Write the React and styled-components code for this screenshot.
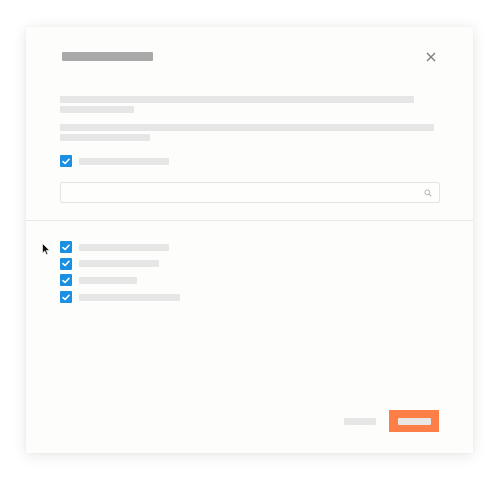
import React from "react";
import styled, { createGlobalStyle } from "styled-components";

const Global = createGlobalStyle`
  html, body { margin: 0; padding: 0; background: #ffffff; }
  body { font-family: "Liberation Sans", Arial, sans-serif; }
`;

const Page = styled.div`
  position: relative;
  width: 500px;
  height: 482px;
  padding: 27px 0 0 26px;
  box-sizing: border-box;
`;

const Modal = styled.div`
  width: 447px;
  height: 426px;
  background: #fdfdfb;
  box-shadow: 0 2px 14px rgba(0, 0, 0, 0.1), 0 0 3px rgba(0, 0, 0, 0.04);
  display: flex;
  flex-direction: column;
`;

const Top = styled.div`
  padding: 25px 33px 0 34px;
  display: flex;
  flex-direction: column;
`;

const Header = styled.div`
  display: flex;
  justify-content: space-between;
  align-items: center;
  height: 9px;
  padding: 0 4px 0 2px;
`;

const Bar = styled.div`
  width: ${(p) => p.w}px;
  height: ${(p) => p.h || 7}px;
  background: ${(p) => p.c || "#e6e6e6"};
  border-radius: 1px;
`;

const Close = styled.button`
  border: 0;
  background: none;
  padding: 0;
  width: 10px;
  height: 10px;
  display: flex;
  cursor: pointer;
`;

const Para = styled.div`
  display: flex;
  flex-direction: column;
  gap: 3px;
  margin-top: ${(p) => p.mt}px;
`;

const CheckRow = styled.div`
  display: flex;
  align-items: center;
  gap: 7px;
  margin-top: ${(p) => p.mt || 0}px;
`;

const Box = styled.span`
  width: 12px;
  height: 12px;
  background: #1b8fe1;
  border-radius: 1px;
  display: flex;
  align-items: center;
  justify-content: center;
`;

const Search = styled.div`
  margin-top: 15px;
  width: 380px;
  height: 21px;
  box-sizing: border-box;
  border: 1px solid #e4e4e2;
  border-radius: 2px;
  background: #fefefd;
  display: flex;
  align-items: center;
  justify-content: flex-end;
  padding-right: 7px;
`;

const Divider = styled.div`
  margin-top: 17px;
  height: 1px;
  background: #e8e8e6;
`;

const List = styled.div`
  padding: 20px 0 0 34px;
  display: flex;
  flex-direction: column;
  gap: 4.7px;
`;

const Footer = styled.div`
  margin-top: auto;
  padding: 0 34px 21px 0;
  display: flex;
  justify-content: flex-end;
  align-items: center;
  gap: 13px;
`;

const Primary = styled.button`
  width: 50px;
  height: 22px;
  border: 0;
  background: #fd7e46;
  display: flex;
  align-items: center;
  justify-content: center;
  padding: 0;
`;

const Pointer = styled.svg`
  position: absolute;
  left: 42px;
  top: 243px;
`;

const Check = () => (
  <Box>
    <svg width="8" height="7" viewBox="0 0 8 7">
      <path d="M1 3.6 L3.1 5.5 L7 1.3" fill="none" stroke="#fff" strokeWidth="1.6" strokeLinecap="round" strokeLinejoin="round" />
    </svg>
  </Box>
);

const items = [90, 80, 58, 101];

export default function App() {
  return (
    <Page>
      <Global />
      <Modal>
        <Top>
          <Header>
            <Bar w={91} h={9} c="#a8a8a8" />
            <Close aria-label="close">
              <svg width="10" height="10" viewBox="0 0 10 10">
                <path d="M1 1 L9 9 M9 1 L1 9" stroke="#7a7a7a" strokeWidth="1.3" />
              </svg>
            </Close>
          </Header>
          <Para mt={35}>
            <Bar w={354} />
            <Bar w={74} />
          </Para>
          <Para mt={11}>
            <Bar w={374} />
            <Bar w={90} />
          </Para>
          <CheckRow mt={14}>
            <Check />
            <Bar w={90} />
          </CheckRow>
          <Search>
            <svg width="8" height="8" viewBox="0 0 8 8">
              <circle cx="3.3" cy="3.3" r="2.4" fill="none" stroke="#b5b5b5" strokeWidth="1" />
              <path d="M5.1 5.1 L7.3 7.3" stroke="#b5b5b5" strokeWidth="1.1" />
            </svg>
          </Search>
        </Top>
        <Divider />
        <List>
          {items.map((w, i) => (
            <CheckRow key={i}>
              <Check />
              <Bar w={w} />
            </CheckRow>
          ))}
        </List>
        <Footer>
          <Bar w={32} />
          <Primary>
            <Bar w={33} c="#e9e7e5" />
          </Primary>
        </Footer>
      </Modal>
      <Pointer width="8" height="13" viewBox="0 0 8 13">
        <path d="M0.5 0.5 L0.5 10 L2.8 7.9 L4.4 11.6 L5.8 11 L4.3 7.4 L7.3 7.2 Z" fill="#111" stroke="#fff" strokeWidth="0.6" />
      </Pointer>
    </Page>
  );
}
